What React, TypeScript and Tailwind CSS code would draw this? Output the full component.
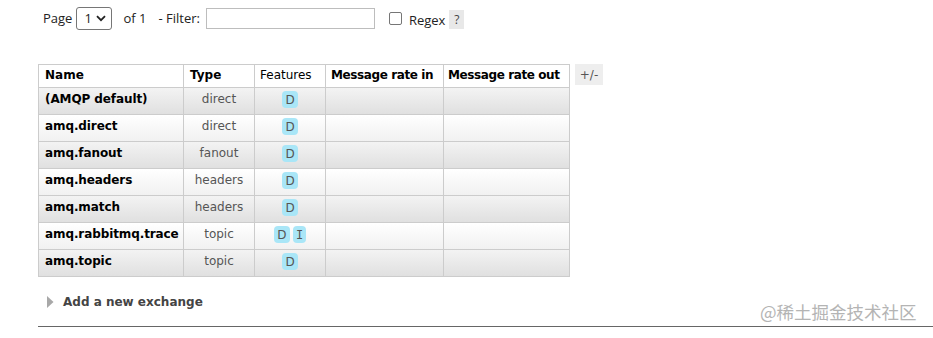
import React from "react";

type Exchange = { name: string; type: string; features: string[] };

const exchanges: Exchange[] = [
  { name: "(AMQP default)", type: "direct", features: ["D"] },
  { name: "amq.direct", type: "direct", features: ["D"] },
  { name: "amq.fanout", type: "fanout", features: ["D"] },
  { name: "amq.headers", type: "headers", features: ["D"] },
  { name: "amq.match", type: "headers", features: ["D"] },
  { name: "amq.rabbitmq.trace", type: "topic", features: ["D", "I"] },
  { name: "amq.topic", type: "topic", features: ["D"] },
];

const cell = "border-r border-b border-[#cccccc] whitespace-nowrap";
const head = `${cell} h-[23px] bg-white pt-[2px] text-black`;

export default function App() {
  return (
    <main className="relative h-[338px] w-[933px] overflow-hidden bg-white font-['DejaVu_Sans',sans-serif] text-[12px] leading-[16px] text-[#222]">
      {/* paging + filter */}
      <div className="ml-[43px] mt-[6px] flex h-[24px] items-center font-['Open_Sans',sans-serif] text-[13px] text-[#222]">
        <span>Page</span>
        <div className="ml-[4px] flex h-[23px] w-[36px] items-center justify-between rounded-[3px] border border-[#767676] pl-[7px] pr-[5px]">
          <span>1</span>
          <svg width="10" height="7" viewBox="0 0 10 7">
            <path d="M1 1.2 L5 5.2 L9 1.2" fill="none" stroke="#222" strokeWidth="1.8" />
          </svg>
        </div>
        <span className="ml-[11px]">of 1</span>
        <span className="ml-[12px]">- Filter:</span>
        <input
          type="text"
          className="ml-[6px] h-[21px] w-[169px] border border-[#bdbdbd] outline-none"
        />
        <input
          type="checkbox"
          className="ml-[14px] mt-[1px] h-[13px] w-[13px] appearance-none rounded-[2px] border border-[#767676] bg-white"
        />
        <span className="ml-[7px] mt-[4px]">Regex</span>
        <span className="ml-[4px] mt-[3px] flex h-[19px] w-[15px] items-center justify-center bg-[#e8e8e8] text-[12px] text-[#444]">
          ?
        </span>
      </div>

      {/* exchanges table */}
      <div className="ml-[38px] mt-[34px] flex items-start">
        <div className="grid grid-cols-[145px_71px_71px_118px_126px] border-l border-t border-[#cccccc]">
          <div className={`${head} px-[6px] font-bold`}>Name</div>
          <div className={`${head} px-[6px] font-bold`}>Type</div>
          <div className={`${head} pl-[5px]`}>Features</div>
          <div className={`${head} px-[5px] font-bold tracking-[-0.4px]`}>Message rate in</div>
          <div className={`${head} px-[4px] font-bold tracking-[-0.4px]`}>Message rate out</div>

          {exchanges.map((ex, i) => {
            const bg =
              i % 2 === 0
                ? "bg-gradient-to-b from-[#f3f3f3] to-[#e0e0e0]"
                : "bg-gradient-to-b from-[#ffffff] to-[#f1f1f1]";
            return (
              <React.Fragment key={ex.name}>
                <div className={`${cell} ${bg} h-[27px] px-[6px] pt-[3px] font-bold tracking-[-0.1px] text-black`}>
                  {ex.name}
                </div>
                <div className={`${cell} ${bg} h-[27px] pt-[3px] text-center text-[#555]`}>{ex.type}</div>
                <div className={`${cell} ${bg} flex h-[27px] justify-center gap-[3px] pt-[3px]`}>
                  {ex.features.map((f) => (
                    <span
                      key={f}
                      className={
                        f === "I"
                          ? "flex h-[17px] items-center justify-center rounded-[4px] bg-[#a9e6f7] px-[3px] font-['DejaVu_Sans_Mono',monospace] text-[#555]"
                          : "flex h-[17px] items-center justify-center rounded-[4px] bg-[#a9e6f7] px-[3.5px] text-[#555]"
                      }
                    >
                      {f}
                    </span>
                  ))}
                </div>
                <div className={`${cell} ${bg} h-[27px]`} />
                <div className={`${cell} ${bg} h-[27px]`} />
              </React.Fragment>
            );
          })}
        </div>
        <span className="ml-[5px] flex h-[21px] w-[28px] items-center justify-center bg-[#eeeeee] text-[#555]">
          +/-
        </span>
      </div>

      {/* add exchange */}
      <div className="ml-[47px] mt-[17px] flex items-center">
        <svg width="7" height="12" viewBox="0 0 7 12">
          <path d="M0 0 L6.5 6 L0 12 Z" fill="#a8a8a8" />
        </svg>
        <span className="ml-[9px] font-bold text-[#444]">Add a new exchange</span>
      </div>

      <div className="ml-[38px] mt-[16px] h-px bg-[#666]" />

      <span className="absolute left-[760px] top-[300px] font-['Noto_Sans_CJK_SC',sans-serif] text-[17.5px] leading-[24px] text-[#b4b4b4]">
        @稀土掘金技术社区
      </span>
    </main>
  );
}
